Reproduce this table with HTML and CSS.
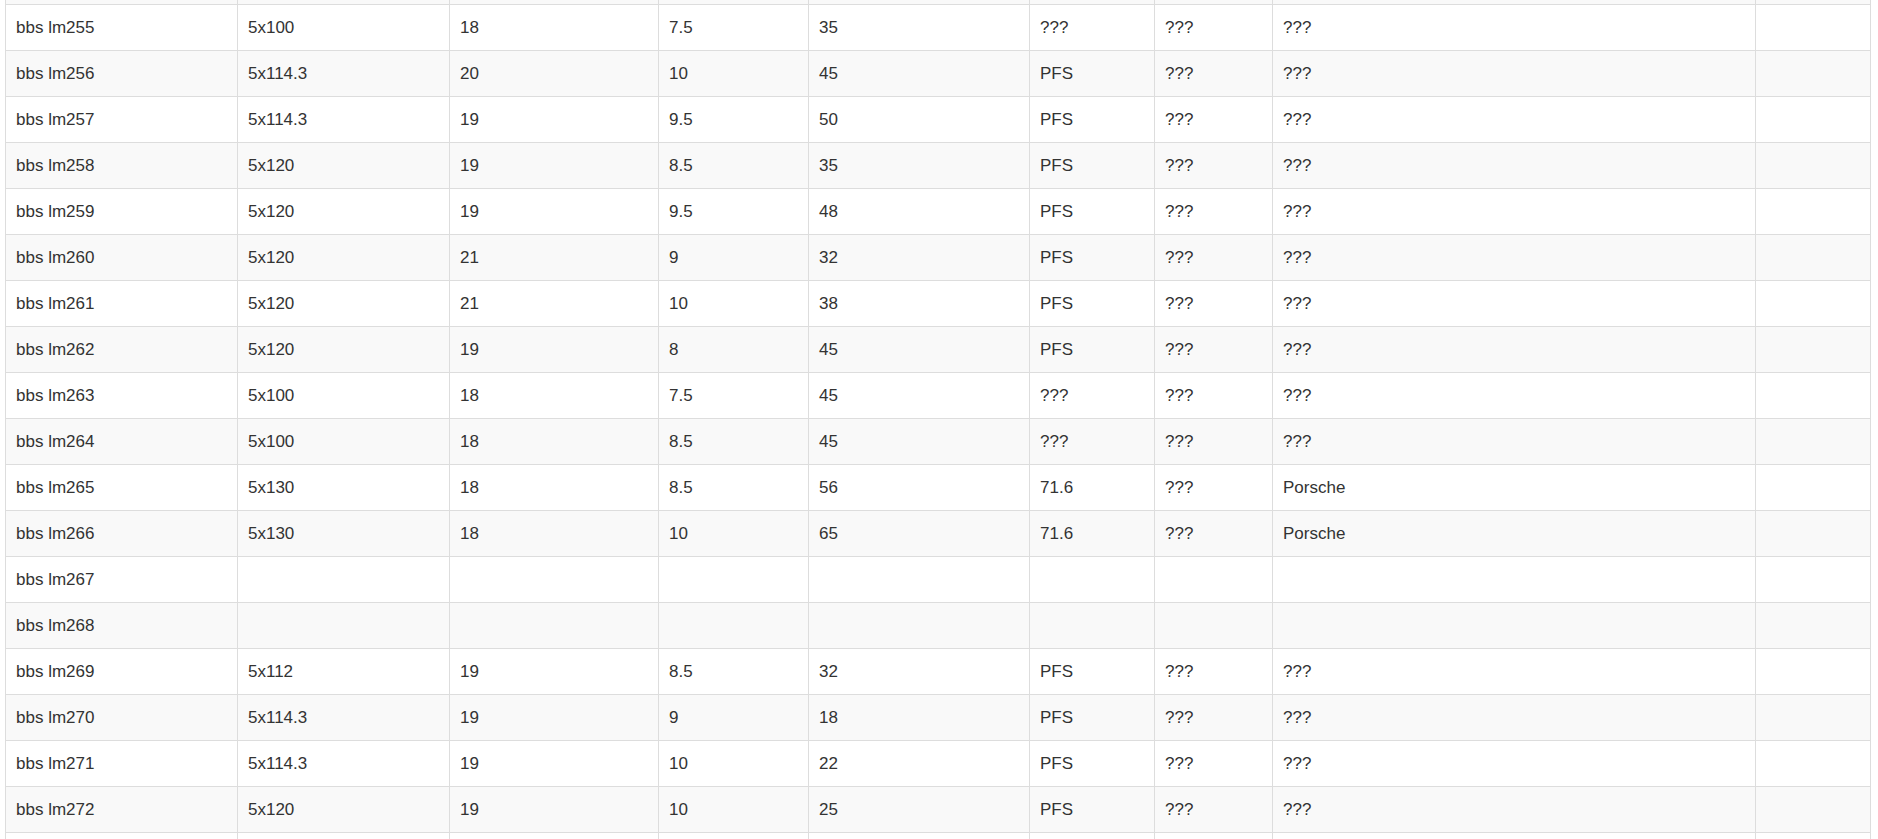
FILE: index.html
```html
<!DOCTYPE html>
<html>
<head>
<meta charset="utf-8">
<link rel="stylesheet" href="styles.css">
</head>
<body>
<div class="wrap">
<table class="grid">
<colgroup>
<col class="c1"><col class="c2"><col class="c3"><col class="c4"><col class="c5"><col class="c6"><col class="c7"><col class="c8"><col class="c9">
</colgroup>
<tbody>
<tr class="alt"><td></td><td></td><td></td><td></td><td></td><td></td><td></td><td></td><td></td></tr>
<tr><td>bbs lm255</td><td>5x100</td><td>18</td><td>7.5</td><td>35</td><td>???</td><td>???</td><td>???</td><td></td></tr>
<tr class="alt"><td>bbs lm256</td><td>5x114.3</td><td>20</td><td>10</td><td>45</td><td>PFS</td><td>???</td><td>???</td><td></td></tr>
<tr><td>bbs lm257</td><td>5x114.3</td><td>19</td><td>9.5</td><td>50</td><td>PFS</td><td>???</td><td>???</td><td></td></tr>
<tr class="alt"><td>bbs lm258</td><td>5x120</td><td>19</td><td>8.5</td><td>35</td><td>PFS</td><td>???</td><td>???</td><td></td></tr>
<tr><td>bbs lm259</td><td>5x120</td><td>19</td><td>9.5</td><td>48</td><td>PFS</td><td>???</td><td>???</td><td></td></tr>
<tr class="alt"><td>bbs lm260</td><td>5x120</td><td>21</td><td>9</td><td>32</td><td>PFS</td><td>???</td><td>???</td><td></td></tr>
<tr><td>bbs lm261</td><td>5x120</td><td>21</td><td>10</td><td>38</td><td>PFS</td><td>???</td><td>???</td><td></td></tr>
<tr class="alt"><td>bbs lm262</td><td>5x120</td><td>19</td><td>8</td><td>45</td><td>PFS</td><td>???</td><td>???</td><td></td></tr>
<tr><td>bbs lm263</td><td>5x100</td><td>18</td><td>7.5</td><td>45</td><td>???</td><td>???</td><td>???</td><td></td></tr>
<tr class="alt"><td>bbs lm264</td><td>5x100</td><td>18</td><td>8.5</td><td>45</td><td>???</td><td>???</td><td>???</td><td></td></tr>
<tr><td>bbs lm265</td><td>5x130</td><td>18</td><td>8.5</td><td>56</td><td>71.6</td><td>???</td><td>Porsche</td><td></td></tr>
<tr class="alt"><td>bbs lm266</td><td>5x130</td><td>18</td><td>10</td><td>65</td><td>71.6</td><td>???</td><td>Porsche</td><td></td></tr>
<tr><td>bbs lm267</td><td></td><td></td><td></td><td></td><td></td><td></td><td></td><td></td></tr>
<tr class="alt"><td>bbs lm268</td><td></td><td></td><td></td><td></td><td></td><td></td><td></td><td></td></tr>
<tr><td>bbs lm269</td><td>5x112</td><td>19</td><td>8.5</td><td>32</td><td>PFS</td><td>???</td><td>???</td><td></td></tr>
<tr class="alt"><td>bbs lm270</td><td>5x114.3</td><td>19</td><td>9</td><td>18</td><td>PFS</td><td>???</td><td>???</td><td></td></tr>
<tr><td>bbs lm271</td><td>5x114.3</td><td>19</td><td>10</td><td>22</td><td>PFS</td><td>???</td><td>???</td><td></td></tr>
<tr class="alt"><td>bbs lm272</td><td>5x120</td><td>19</td><td>10</td><td>25</td><td>PFS</td><td>???</td><td>???</td><td></td></tr>
<tr><td></td><td></td><td></td><td></td><td></td><td></td><td></td><td></td><td></td></tr>
</tbody>
</table>
</div>
</body>
</html>
```

FILE: styles.css
```css
html, body {
  margin: 0;
  padding: 0;
  background: #fff;
  overflow: hidden;
}
.wrap {
  padding-left: 5px;
}
.grid {
  margin-top: -42px;
  border-collapse: collapse;
  table-layout: fixed;
  width: 1866px;
  font-family: "Liberation Sans", Arial, sans-serif;
  font-size: 17px;
  line-height: 25px;
  color: #333;
}
.grid td {
  border: 1px solid #ddd;
  padding: 10px;
  vertical-align: top;
  white-space: nowrap;
  height: 25px;
}
.grid tr.alt td {
  background: #f9f9f9;
}
.c1 { width: 232px; }
.c2 { width: 212px; }
.c3 { width: 209px; }
.c4 { width: 150px; }
.c5 { width: 221px; }
.c6 { width: 125px; }
.c7 { width: 118px; }
.c8 { width: 483px; }
.c9 { width: 115px; }
```
